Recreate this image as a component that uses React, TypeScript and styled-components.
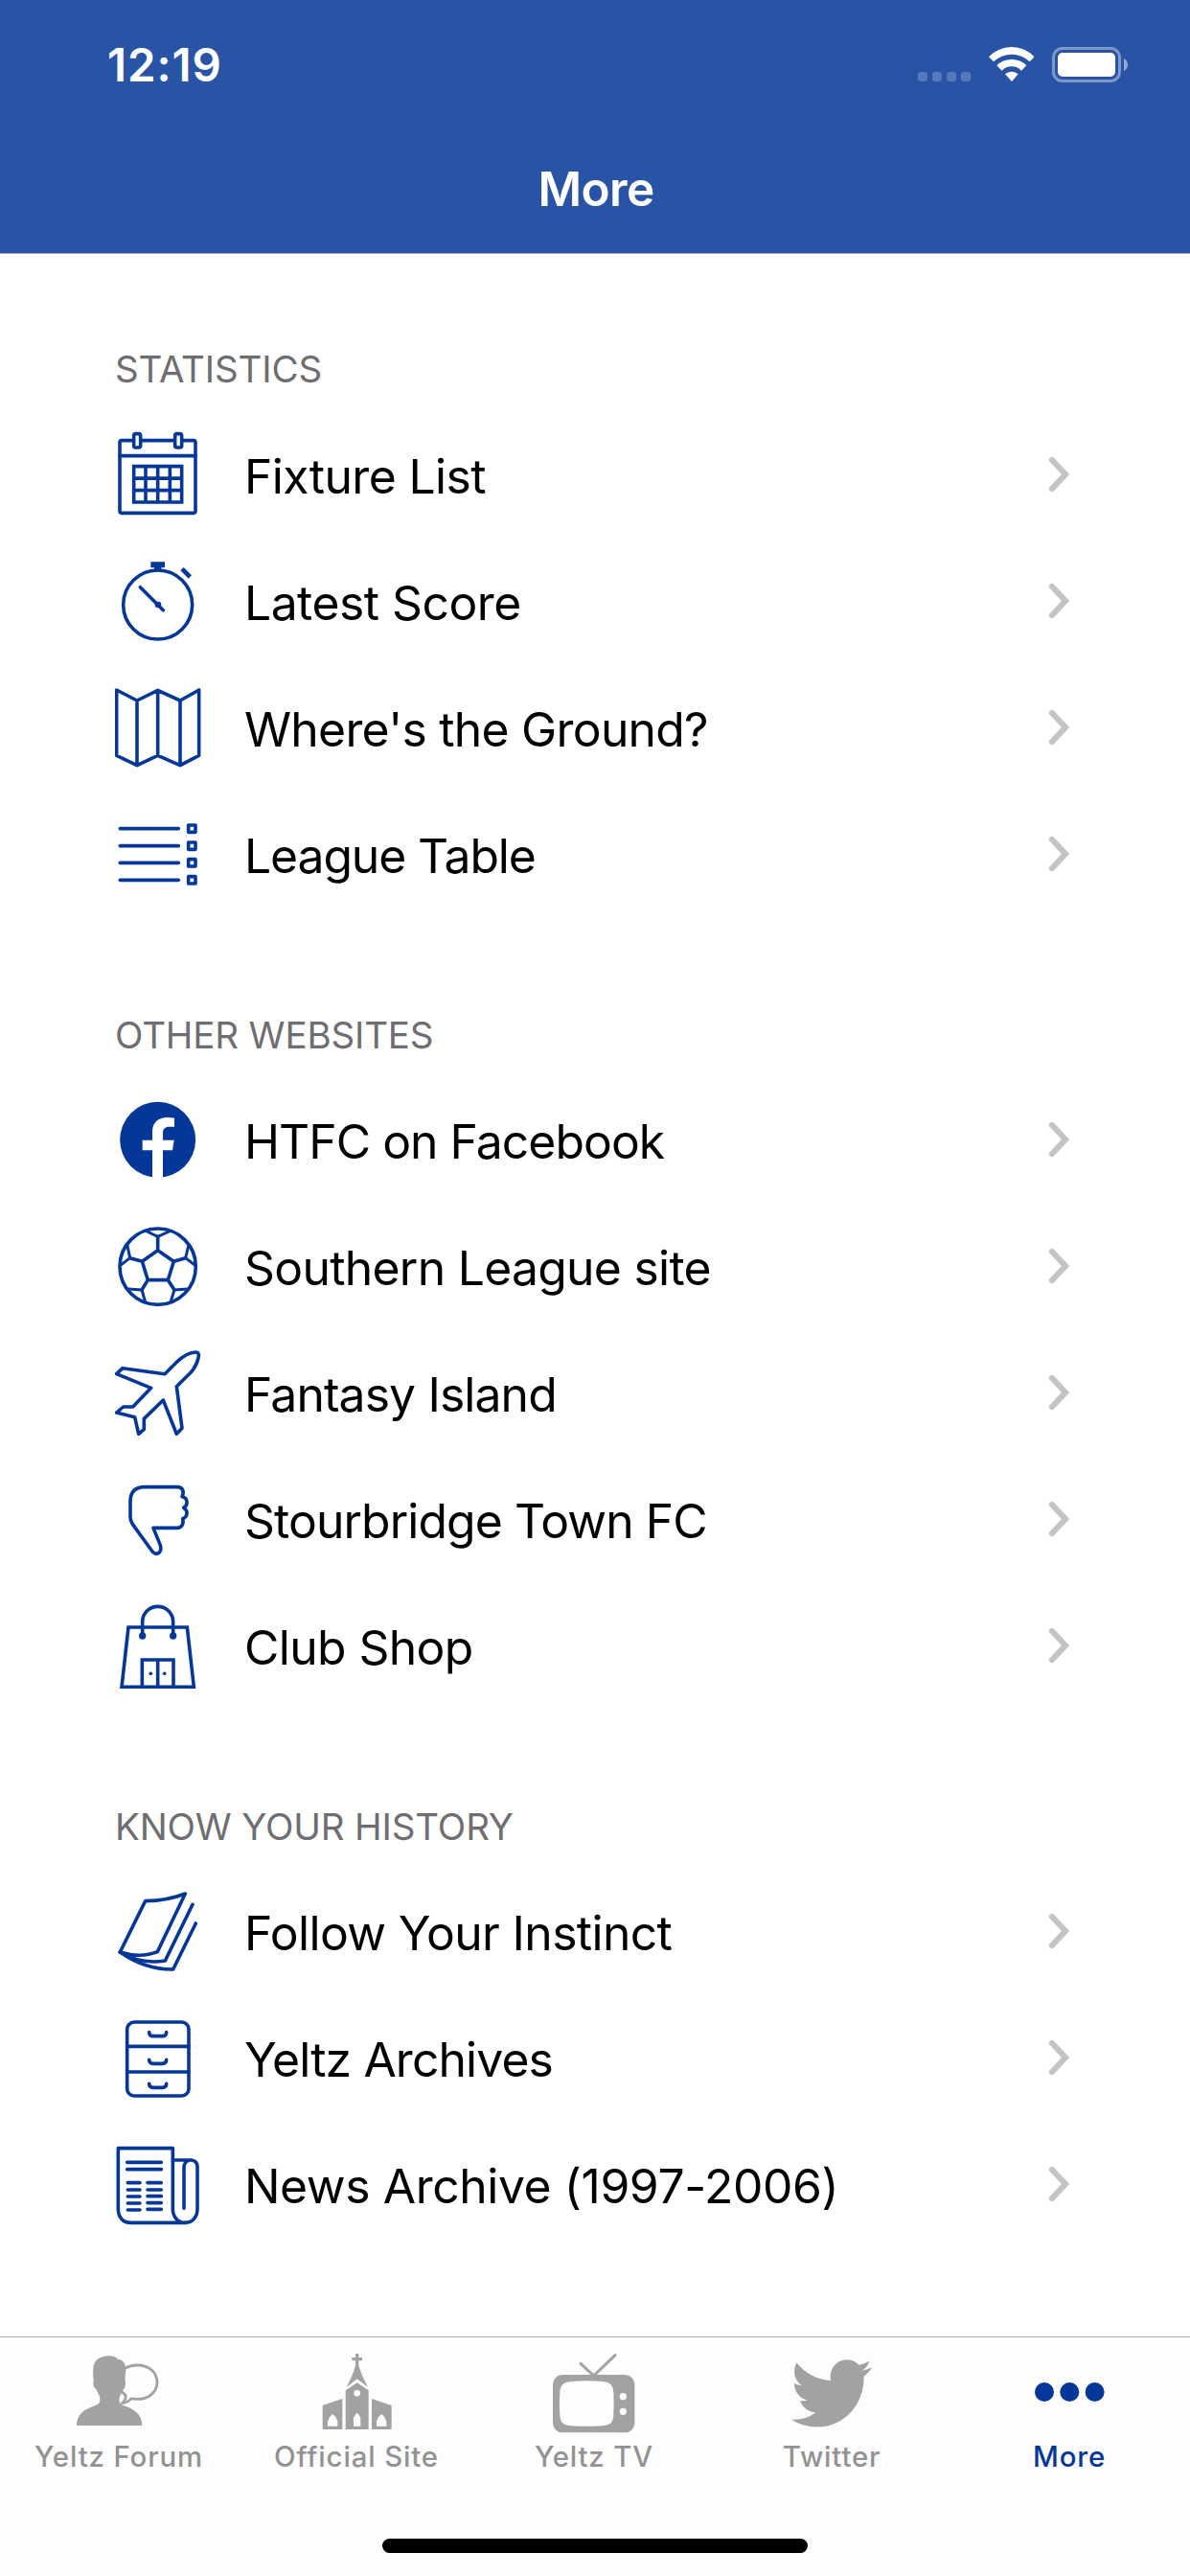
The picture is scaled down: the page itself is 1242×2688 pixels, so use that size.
import React from "react";
import styled, { createGlobalStyle } from "styled-components";

const BLUE = "#053799";
const GREY = "#a2a2a2";

const GlobalStyle = createGlobalStyle`
  * { box-sizing: border-box; }
  body { margin: 0; background: #fff; }
`;

const Screen = styled.div`
  width: 1242px;
  height: 2688px;
  display: flex;
  flex-direction: column;
  overflow: hidden;
  background: #fff;
  color: #000;
  font-family: Inter, "Liberation Sans", sans-serif;
`;

const Header = styled.header`
  height: 265px;
  flex: none;
  background: #2954a6;
  border-bottom: 1px solid #a6a9b0;
  color: #fff;
`;

const StatusBar = styled.div`
  height: 132px;
  display: flex;
  align-items: flex-start;
  justify-content: space-between;
  padding: 49px 65px 0 112px;
`;

const Time = styled.span`
  font-size: 47.5px;
  font-weight: 600;
  line-height: 38px;
  letter-spacing: 0.9px;
`;

const StatusIcons = styled.div`
  display: flex;
  gap: 18.67px;
`;

const Title = styled.h1`
  margin: 0;
  height: 132px;
  padding-left: 2px;
  line-height: 131px;
  font-size: 49.5px;
  font-weight: 600;
  text-align: center;
  letter-spacing: -0.6px;
`;

const Content = styled.main`
  flex: 1;
  padding: 0 120px;
`;

const SectionTitle = styled.h2<{ $first?: boolean }>`
  margin: 0;
  height: ${(p) => (p.$first ? 164 : 166)}px;
  display: flex;
  align-items: flex-end;
  padding-bottom: ${(p) => (p.$first ? 20 : 19)}px;
  font-size: 38.5px;
  line-height: 48px;
  font-weight: 400;
  letter-spacing: -0.15px;
  color: #6e6e72;
`;

const Row = styled.a`
  height: 132px;
  display: flex;
  align-items: center;
  gap: 45px;
`;

const RowLabel = styled.span<{ $spacing?: number }>`
  flex: 1;
  padding-top: 4px;
  font-size: 49.8px;
  line-height: 60px;
  letter-spacing: ${(p) => p.$spacing ?? -0.6}px;
  white-space: nowrap;
`;

const LineIcon = styled.svg`
  width: 90px;
  height: 90px;
  flex: none;
  fill: none;
  stroke: ${BLUE};
  stroke-width: 10.8;
  stroke-linejoin: round;
  stroke-linecap: round;
`;

const Chevron = styled.svg`
  width: 22px;
  height: 38px;
  margin-right: 6px;
  flex: none;
  fill: none;
  stroke: #c4c4c6;
  stroke-width: 6.2;
  stroke-linecap: round;
  stroke-linejoin: miter;
`;

const TabBar = styled.nav`
  height: 250px;
  flex: none;
  display: flex;
  flex-direction: column;
  background: #fdfdfd;
  border-top: 1px solid #b0b0b0;
`;

const Tabs = styled.div`
  display: flex;
  height: 210px;
`;

const Tab = styled.a<{ $active?: boolean }>`
  width: 248px;
  display: flex;
  flex-direction: column;
  align-items: center;
  padding-top: 14px;
  color: ${(p) => (p.$active ? BLUE : "#929292")};
`;

const TabIcon = styled.svg`
  width: 90px;
  height: 90px;
`;

const TabLabel = styled.span`
  margin-top: 3px;
  font-size: 29.4px;
  font-weight: 450;
  line-height: 36px;
  letter-spacing: 0.85px;
  white-space: nowrap;
`;

const HomeIndicator = styled.div`
  width: 444px;
  height: 15px;
  border-radius: 8px;
  background: #000;
  align-self: center;
`;

const CalendarIcon = () => (
  <LineIcon viewBox="60 330 270 270">
    <rect x="75" y="359" width="237" height="227" rx="6" />
    <path d="M75 407H312" />
    <rect x="119" y="338" width="21" height="43" rx="6" fill="#fff" />
    <rect x="248" y="338" width="21" height="43" rx="6" fill="#fff" />
    <g strokeLinejoin="miter" strokeLinecap="butt">
      <path d="M119 440H269V552H119ZM156 440V552M194 440V552M232 440V552M119 477.500H269M119 515H269" />
    </g>
  </LineIcon>
);

const StopwatchIcon = () => (
  <LineIcon viewBox="60 726 270 270">
    <circle cx="194" cy="873" r="108" />
    <path d="M172 739H216V757H205V765H183V757H172Z" fill={BLUE} stroke="none" />
    <path d="M139 818L211 890" />
    <circle cx="195" cy="873" r="10" fill={BLUE} stroke="none" />
    <path d="M270 761L295 786" strokeWidth="14" strokeLinecap="butt" />
  </LineIcon>
);

const MapIcon = () => (
  <LineIcon viewBox="60 102 270 270">
    <path d="M65 120L129 153L194 121L264 153L323 120V325L264 356L194 325L129 356L65 325ZM129 153V356M194 121V325M264 153V356" />
  </LineIcon>
);

const TableIcon = () => (
  <LineIcon viewBox="60 498 270 270">
    {[554, 608, 661, 715].map((y) => (
      <g key={y}>
        <path d={`M76 ${y}H259`} />
        <rect x="290" y={y - 11} width="22" height="22" />
      </g>
    ))}
  </LineIcon>
);

const FacebookIcon = () => (
  <LineIcon viewBox="60 312 270 270">
    <circle cx="194" cy="448" r="118.500" fill={BLUE} stroke="none" />
    <path
      fill="#fff"
      stroke="none"
      d="M177 570V481H146V449H177V424C177 393 196 378 224 378Q235 378 246 380V407H231C216 407 210 414 210 427V449H245L240 481H210V570Z"
    />
  </LineIcon>
);

const BallIcon = () => (
  <LineIcon viewBox="60 708 270 270">
    <circle cx="194" cy="845" r="119" />
    <path d="M194 794L244 829L226 887H163L145 829ZM194 794V751M244 829L281 818M226 887L246 918M163 887L144 918M145 829L107 818" />
    <path
      strokeWidth="9"
      d="M160 735L194 751L230 735M290 780L281 818L312 842M99 780L107 818L76 842M288 915L246 918L234 956M101 915L144 918L155 956"
    />
  </LineIcon>
);

const PlaneIcon = () => (
  <LineIcon viewBox="60 84 270 270">
    <path d="M216 161L252 125C275 103 299 93 313 93C323 93 323 102 321 111C317 128 309 143 297 157L253 200L270 331L253 349L211 243L151 301V334L134 349L122 296L65 282L86 264H116L173 205L65 161L84 143Z" />
  </LineIcon>
);

const ThumbIcon = () => (
  <LineIcon viewBox="60 480 270 270">
    <path d="M150 515H255C272 515 278 530 270 545C290 549 289 572 275 580C290 588 288 609 272 614C276 631 269 643 255 643H180L202 697C207 714 199 724 189 724C182 724 178 718 175 714L115 631Q108 621 108 608V557Q110 517 150 515Z" />
  </LineIcon>
);

const ShopIcon = () => (
  <LineIcon viewBox="60 876 270 270">
    <g strokeLinejoin="miter" strokeLinecap="butt">
      <path d="M102 954H286L307 1141H81Z" />
      <path d="M146 980V937A48 48 0 0 1 242 937V980" />
      <path d="M145 1141V1056H243V1141M194 1056V1141" />
    </g>
    <g fill={BLUE} stroke="none">
      <circle cx="146" cy="981" r="11" />
      <circle cx="242" cy="981" r="11" />
      <circle cx="172" cy="1099" r="5.500" />
      <circle cx="215" cy="1099" r="5.500" />
    </g>
  </LineIcon>
);

const PagesIcon = () => (
  <LineIcon viewBox="60 330 270 270">
    <path d="M155 371Q225 370 280 348L193 530Q140 551 76 531Z" />
    <path d="M76 531Q140 570 217 558L303 382" />
    <path d="M76 531Q155 586 242 585L313 441" />
  </LineIcon>
);

const CabinetIcon = () => (
  <LineIcon viewBox="60 726 270 270">
    <rect x="98" y="750" width="193" height="231" rx="22" />
    <path d="M98 826H291M98 906H291" />
    {[782, 868, 943].map((y) => (
      <path key={y} d={`M167 ${y}Q167 ${y + 12} 180 ${y + 12}H208Q221 ${y + 12} 221 ${y}`} />
    ))}
  </LineIcon>
);

const NewsIcon = () => (
  <LineIcon viewBox="60 1122 270 270">
    <path d="M70 1145H241V1335C241 1361 258 1378 280 1378H110C85 1378 70 1361 70 1335Z" />
    <path d="M241 1182H299Q318 1184 318 1204V1335C318 1361 302 1378 280 1378M276 1333V1206Q276 1188 291 1183" />
    <path d="M98 1189H205M98 1211H205" />
    <path d="M100 1253H138M100 1275H138M100 1296H138M100 1317H138M100 1338H138M162 1253H205M162 1275H205M162 1295H205M162 1316H205M162 1336H205" />
  </LineIcon>
);

const ForumIcon = () => (
  <TabIcon viewBox="27 39 270 270">
    <path
      fill={GREY}
      d="M30 273C30 237 55 221 90 210C100 206 104 200 103 190C104 180 95 172 92 160C84 155 80 145 83 132C80 115 81 95 84 82C92 60 115 55 131 55C145 55 155 60 160 66C175 66 184 80 184 100C183 115 180 125 182 132C184 145 182 158 174 163C170 175 163 182 163 192C163 201 167 207 178 211C210 221 235 238 235 273Z"
    />
    <path
      fill="none"
      stroke={GREY}
      strokeWidth="8.500"
      strokeLinejoin="round"
      d="M182 94C196 85 208 84 220 84C258 84 282 108 282 138C282 170 252 193 215 190Q203 188 199 190C190 200 182 202 172 203C182 195 185 187 183 178Q176 172 170 165"
    />
  </TabIcon>
);

const ChurchIcon = () => (
  <TabIcon viewBox="771 39 270 270" fill={GREY} fillRule="evenodd">
    <path d="M903 48H913V60H924V70H913V85C919 107 930 130 942 153L908 127L875 153C887 130 898 107 903 85V70H892V60H903Z" />
    <path d="M872 285V163L908 139L944 163V285ZM908 162A10 10 0 1 0 908 182A10 10 0 1 0 908 162ZM897 275V250Q900 240 908 233Q916 240 919 250V275Z" />
    <path d="M800 210L862 189V285H803Q800 285 800 282ZM816 275V260Q820 245 831 237Q843 245 847 260V275Z" />
    <path d="M1016 210L954 189V285H1013Q1016 285 1016 282ZM1000 275V260Q996 245 985 237Q973 245 969 260V275Z" />
  </TabIcon>
);

const TvIcon = () => (
  <TabIcon viewBox="45 39 270 270">
    <rect x="51" y="114" width="256" height="181" rx="30" fill={GREY} />
    <path
      fill="#fdfdfd"
      d="M110 135Q156 131 205 135C232 137 240 148 241 170Q243 205 241 240C240 262 232 272 205 274Q156 277 108 274C82 272 74 262 73 240Q70 205 73 170C74 148 82 137 110 135Z"
    />
    <circle cx="271" cy="182" r="11" fill="#fdfdfd" />
    <circle cx="271" cy="229" r="11" fill="#fdfdfd" />
    <path d="M138 79L179 117L246 53" fill="none" stroke={GREY} strokeWidth="9" strokeLinecap="round" />
  </TabIcon>
);

const TwitterIcon = () => (
  <TabIcon viewBox="789 39 270 270" fill={GREY}>
    <path
      transform="translate(797 42.5) scale(10.56 10.8)"
      d="M23.953 4.57a10 10 0 01-2.825.775 4.958 4.958 0 002.163-2.723c-.951.555-2.005.959-3.127 1.184a4.92 4.92 0 00-8.384 4.482C7.69 8.095 4.067 6.13 1.64 3.162a4.822 4.822 0 00-.666 2.475c0 1.71.87 3.213 2.188 4.096a4.904 4.904 0 01-2.228-.616v.06a4.923 4.923 0 003.946 4.827 4.996 4.996 0 01-2.212.085 4.936 4.936 0 004.604 3.417 9.867 9.867 0 01-6.102 2.105c-.39 0-.779-.023-1.17-.067a13.995 13.995 0 007.557 2.209c9.053 0 13.998-7.496 13.998-13.985 0-.21 0-.42-.015-.63A9.935 9.935 0 0024 4.59z"
    />
  </TabIcon>
);

const MoreIcon = () => (
  <TabIcon viewBox="0 0 90 90" fill={BLUE}>
    <circle cx="19" cy="43" r="10" />
    <circle cx="45.300" cy="43" r="10" />
    <circle cx="71.600" cy="43" r="10" />
  </TabIcon>
);

type Item = { label: string; Icon: React.FC; spacing?: number };

const sections: { title: string; items: Item[] }[] = [
  {
    title: "STATISTICS",
    items: [
      { label: "Fixture List", Icon: CalendarIcon },
      { label: "Latest Score", Icon: StopwatchIcon, spacing: -0.5 },
      { label: "Where's the Ground?", Icon: MapIcon, spacing: -0.72 },
      { label: "League Table", Icon: TableIcon, spacing: -1.08 },
    ],
  },
  {
    title: "OTHER WEBSITES",
    items: [
      { label: "HTFC on Facebook", Icon: FacebookIcon, spacing: -0.95 },
      { label: "Southern League site", Icon: BallIcon, spacing: -0.7 },
      { label: "Fantasy Island", Icon: PlaneIcon, spacing: -0.87 },
      { label: "Stourbridge Town FC", Icon: ThumbIcon, spacing: -0.9 },
      { label: "Club Shop", Icon: ShopIcon },
    ],
  },
  {
    title: "KNOW YOUR HISTORY",
    items: [
      { label: "Follow Your Instinct", Icon: PagesIcon, spacing: -0.63 },
      { label: "Yeltz Archives", Icon: CabinetIcon, spacing: -0.87 },
      { label: "News Archive (1997-2006)", Icon: NewsIcon, spacing: -0.4 },
    ],
  },
];

const tabs: { label: string; Icon: React.FC; active?: boolean }[] = [
  { label: "Yeltz Forum", Icon: ForumIcon },
  { label: "Official Site", Icon: ChurchIcon },
  { label: "Yeltz TV", Icon: TvIcon },
  { label: "Twitter", Icon: TwitterIcon },
  { label: "More", Icon: MoreIcon, active: true },
];

export default function App() {
  return (
    <Screen>
      <GlobalStyle />
      <Header>
        <StatusBar>
          <Time>12:19</Time>
          <StatusIcons>
            <svg width="55" height="37" viewBox="84 57 165 111" fill="#fff" fillOpacity="0.22">
              {[84, 129, 174, 219].map((x) => (
                <rect key={x} x={x} y="135" width="30" height="30" rx="9" />
              ))}
            </svg>
            <svg width="47.670" height="37" viewBox="305 57 143 111" fill="#fff">
              <path d="M305 88A98 98 0 0 1 448 88L433 103A82 82 0 0 0 320 103Z" />
              <path d="M330 115A66 66 0 0 1 423 115L407 131A42 42 0 0 0 346 131Z" />
              <path d="M356 142A30 30 0 0 1 397 142L377 165Z" />
            </svg>
            <svg width="79" height="37" viewBox="504 57 237 111" fill="#fff">
              <rect x="508.500" y="61.500" width="207" height="102" rx="28" fill="none" stroke="#fff" strokeOpacity="0.4" strokeWidth="9" />
              <rect x="522" y="75" width="180" height="75" rx="15" />
              <path d="M729 93C745 100 745 125 729 132Z" fillOpacity="0.5" />
            </svg>
          </StatusIcons>
        </StatusBar>
        <Title>More</Title>
      </Header>
      <Content>
        {sections.map((section, i) => (
          <section key={section.title}>
            <SectionTitle $first={i === 0}>{section.title}</SectionTitle>
            {section.items.map(({ label, Icon, spacing }) => (
              <Row key={label}>
                <Icon />
                <RowLabel $spacing={spacing}>{label}</RowLabel>
                <Chevron viewBox="0 0 22 38">
                  <path d="M4 4L18 19L4 34" />
                </Chevron>
              </Row>
            ))}
          </section>
        ))}
      </Content>
      <TabBar>
        <Tabs>
          {tabs.map(({ label, Icon, active }) => (
            <Tab key={label} $active={active}>
              <Icon />
              <TabLabel>{label}</TabLabel>
            </Tab>
          ))}
        </Tabs>
        <HomeIndicator />
      </TabBar>
    </Screen>
  );
}
